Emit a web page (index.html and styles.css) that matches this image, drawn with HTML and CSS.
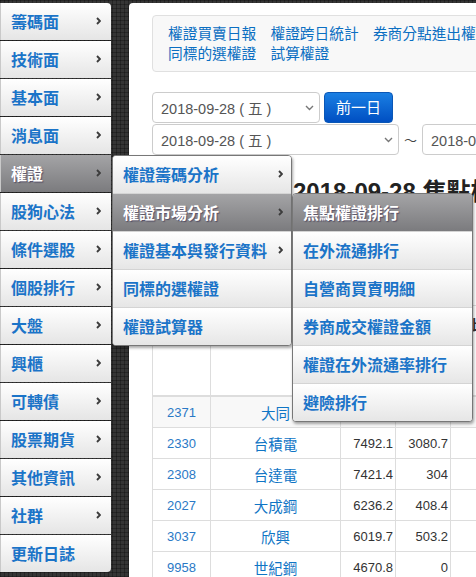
FILE: index.html
```html
<!DOCTYPE html>
<html lang="zh-Hant">
<head>
<meta charset="utf-8">
<title>焦點權證排行</title>
<link rel="stylesheet" href="styles.css">
</head>
<body>
<div class="page">
  <nav class="side">
    <ul class="menu">
      <li class="mi"><span class="lbl">籌碼面</span><svg class="chev" viewBox="0 0 5 8"><polyline points="1,1 4,4 1,7"/></svg></li>
      <li class="mi"><span class="lbl">技術面</span><svg class="chev" viewBox="0 0 5 8"><polyline points="1,1 4,4 1,7"/></svg></li>
      <li class="mi"><span class="lbl">基本面</span><svg class="chev" viewBox="0 0 5 8"><polyline points="1,1 4,4 1,7"/></svg></li>
      <li class="mi"><span class="lbl">消息面</span><svg class="chev" viewBox="0 0 5 8"><polyline points="1,1 4,4 1,7"/></svg></li>
      <li class="mi on"><span class="lbl">權證</span><svg class="chev" viewBox="0 0 5 8"><polyline points="1,1 4,4 1,7"/></svg>
        <ul class="sub sub1">
          <li class="si"><span class="lbl">權證籌碼分析</span><svg class="chev" viewBox="0 0 5 8"><polyline points="1,1 4,4 1,7"/></svg></li>
          <li class="si on"><span class="lbl">權證市場分析</span><svg class="chev" viewBox="0 0 5 8"><polyline points="1,1 4,4 1,7"/></svg>
            <ul class="sub sub2">
              <li class="si on"><span class="lbl">焦點權證排行</span></li>
              <li class="si"><span class="lbl">在外流通排行</span></li>
              <li class="si"><span class="lbl">自營商買賣明細</span></li>
              <li class="si"><span class="lbl">券商成交權證金額</span></li>
              <li class="si"><span class="lbl">權證在外流通率排行</span></li>
              <li class="si"><span class="lbl">避險排行</span></li>
            </ul>
          </li>
          <li class="si"><span class="lbl">權證基本與發行資料</span><svg class="chev" viewBox="0 0 5 8"><polyline points="1,1 4,4 1,7"/></svg></li>
          <li class="si"><span class="lbl">同標的選權證</span></li>
          <li class="si"><span class="lbl">權證試算器</span></li>
        </ul>
      </li>
      <li class="mi"><span class="lbl">股狗心法</span><svg class="chev" viewBox="0 0 5 8"><polyline points="1,1 4,4 1,7"/></svg></li>
      <li class="mi"><span class="lbl">條件選股</span><svg class="chev" viewBox="0 0 5 8"><polyline points="1,1 4,4 1,7"/></svg></li>
      <li class="mi"><span class="lbl">個股排行</span><svg class="chev" viewBox="0 0 5 8"><polyline points="1,1 4,4 1,7"/></svg></li>
      <li class="mi"><span class="lbl">大盤</span><svg class="chev" viewBox="0 0 5 8"><polyline points="1,1 4,4 1,7"/></svg></li>
      <li class="mi"><span class="lbl">興櫃</span><svg class="chev" viewBox="0 0 5 8"><polyline points="1,1 4,4 1,7"/></svg></li>
      <li class="mi"><span class="lbl">可轉債</span><svg class="chev" viewBox="0 0 5 8"><polyline points="1,1 4,4 1,7"/></svg></li>
      <li class="mi"><span class="lbl">股票期貨</span><svg class="chev" viewBox="0 0 5 8"><polyline points="1,1 4,4 1,7"/></svg></li>
      <li class="mi"><span class="lbl">其他資訊</span><svg class="chev" viewBox="0 0 5 8"><polyline points="1,1 4,4 1,7"/></svg></li>
      <li class="mi"><span class="lbl">社群</span><svg class="chev" viewBox="0 0 5 8"><polyline points="1,1 4,4 1,7"/></svg></li>
      <li class="mi last"><span class="lbl">更新日誌</span></li>
    </ul>
  </nav>

  <main class="panel">
    <div class="crumbs">
      <a href="#">權證買賣日報</a>
      <a href="#">權證跨日統計</a>
      <a href="#">券商分點進出權證</a>
      <a href="#">權證熱門排行</a>
      <a href="#">權證成交量統計</a>
      <a href="#">同標的選權證</a>
      <a href="#">試算權證</a>
    </div>

    <div class="dates">
      <div class="row">
        <div class="sel w1"><span>2018-09-28 ( 五 )</span><svg class="down" viewBox="0 0 9 6"><polyline points="1,1 4.5,4.5 8,1"/></svg></div>
        <button class="btn" type="button">前一日</button>
      </div>
      <div class="row">
        <div class="sel w2"><span>2018-09-28 ( 五 )</span><svg class="down" viewBox="0 0 9 6"><polyline points="1,1 4.5,4.5 8,1"/></svg></div>
        <span class="tilde">～</span>
        <div class="sel w2"><span>2018-09-28 ( 五 )</span><svg class="down" viewBox="0 0 9 6"><polyline points="1,1 4.5,4.5 8,1"/></svg></div>
      </div>
    </div>

    <h2 class="title">2018-09-28 焦點權證排行</h2>

    <table class="grid">
      <colgroup>
        <col class="c1"><col class="c2"><col class="c3"><col class="c4"><col class="c5">
      </colgroup>
      <thead>
        <tr>
          <th><div class="th">代號</div></th>
          <th><div class="th">名稱</div></th>
          <th><div class="th">成交金額</div></th>
          <th><div class="th">權證金額</div></th>
          <th><div class="th">比例</div></th>
        </tr>
      </thead>
      <tbody>
        <tr class="hl"><td class="code">2371</td><td class="name">大同</td><td class="num">7533.6</td><td class="num">1121.4</td><td></td></tr>
        <tr><td class="code">2330</td><td class="name">台積電</td><td class="num">7492.1</td><td class="num">3080.7</td><td></td></tr>
        <tr><td class="code">2308</td><td class="name">台達電</td><td class="num">7421.4</td><td class="num">304</td><td></td></tr>
        <tr><td class="code">2027</td><td class="name">大成鋼</td><td class="num">6236.2</td><td class="num">408.4</td><td></td></tr>
        <tr><td class="code">3037</td><td class="name">欣興</td><td class="num">6019.7</td><td class="num">503.2</td><td></td></tr>
        <tr><td class="code">9958</td><td class="name">世紀鋼</td><td class="num">4670.8</td><td class="num">0</td><td></td></tr>
      </tbody>
    </table>
  </main>
</div>
</body>
</html>
```

FILE: styles.css
```css
html, body {
  margin: 0;
  padding: 0;
  height: 100%;
  overflow: hidden;
}

body {
  background-color: #353535;
  background-image:
    linear-gradient(rgba(0, 0, 0, 0.28) 1px, transparent 1px),
    linear-gradient(90deg, rgba(0, 0, 0, 0.28) 1px, transparent 1px);
  background-size: 4px 4px;
  font-family: "Liberation Sans", "Noto Sans CJK TC", sans-serif;
}

.page {
  display: flex;
  align-items: flex-start;
  gap: 18px;
  padding-top: 3px;
}

/* ---------- sidebar ---------- */
.side {
  flex: none;
  width: 111px;
  position: relative;
  z-index: 5;
}

.menu {
  list-style: none;
  margin: 0;
  padding: 0;
}

.mi {
  position: relative;
  box-sizing: border-box;
  height: 37px;
  margin-bottom: 1px;
  padding: 0 10px 2px 10px;
  display: flex;
  align-items: center;
  justify-content: space-between;
  background: linear-gradient(#ffffff, #e5e5e5);
  border-left: 1px solid #c9c9c9;
}

.mi:first-child {
  border-top-right-radius: 4px;
}

.mi.last {
  border-bottom-right-radius: 4px;
}

.lbl {
  font-family: "Noto Sans CJK TC", sans-serif;
  font-weight: 700;
  font-size: 16px;
  line-height: 20px;
  color: #1b74c8;
  white-space: nowrap;
}

.on > .lbl {
  color: #ffffff;
  text-shadow: 1px 1px 1px rgba(40, 30, 70, 0.55);
}

.mi.on,
.si.on {
  background: linear-gradient(#a4a4a6, #7b7b7e);
}

.chev {
  width: 5px;
  height: 8px;
  flex: none;
}

.chev polyline {
  fill: none;
  stroke: #3c3c3c;
  stroke-width: 1.9;
}

/* ---------- flyout menus ---------- */
.sub {
  list-style: none;
  margin: 0;
  padding: 0;
  position: absolute;
  box-sizing: border-box;
  border: 1px solid #777777;
  border-radius: 4px;
  background: #ffffff;
  box-shadow: 1px 2px 3px rgba(0, 0, 0, 0.35);
}

.sub1 {
  left: 111px;
  top: 0;
  width: 180px;
}

.sub2 {
  left: calc(100% + 1px);
  top: -1px;
  width: 181px;
}

.si {
  position: relative;
  height: 35px;
  padding: 0 8px 2px 10px;
  display: flex;
  align-items: center;
  justify-content: space-between;
  background: linear-gradient(#ffffff, #e6e6e6);
  border-bottom: 1px solid #d4d4d4;
}

.si:first-child {
  border-radius: 3px 3px 0 0;
}

.si:last-child {
  border-bottom: 0;
  border-radius: 0 0 3px 3px;
}

/* ---------- main panel ---------- */
.panel {
  flex: none;
  width: 720px;
  min-height: 640px;
  box-sizing: border-box;
  padding: 12px 0 0 23px;
  background: #ffffff;
  border-top-left-radius: 4px;
}

.crumbs {
  width: 640px;
  box-sizing: border-box;
  display: flex;
  flex-wrap: wrap;
  column-gap: 14.3px;
  padding: 7px 15px 8px;
  background: #f8f8f8;
  border: 1px solid #e0e0e0;
  border-radius: 4px;
}

.crumbs a {
  font-family: "Noto Sans CJK TC", sans-serif;
  font-size: 14.7px;
  line-height: 20px;
  color: #0b6fc2;
  text-decoration: none;
  white-space: nowrap;
}

.dates {
  margin-top: 20px;
}

.row {
  display: flex;
  align-items: center;
}

.row + .row {
  margin-top: 1px;
}

.sel {
  box-sizing: border-box;
  height: 31px;
  padding: 0 5px 0 8px;
  display: flex;
  align-items: center;
  justify-content: space-between;
  background: #ffffff;
  border: 1px solid #cccccc;
  border-radius: 4px;
  font-size: 14.5px;
  color: #555555;
  white-space: nowrap;
}

.w1 { width: 168px; }
.w2 { width: 247px; }

.down {
  width: 9px;
  height: 6px;
  flex: none;
}

.down polyline {
  fill: none;
  stroke: #777777;
  stroke-width: 1.4;
}

.btn {
  margin-left: 4px;
  width: 69px;
  height: 31px;
  padding: 0 0 2px;
  border: 1px solid #0a57b6;
  border-radius: 4px;
  background: linear-gradient(#1a7fe3, #004fc2);
  color: #ffffff;
  font-family: "Noto Sans CJK TC", sans-serif;
  font-size: 15px;
}

.tilde {
  width: 23px;
  text-align: center;
  font-family: "Noto Sans CJK TC", sans-serif;
  font-size: 13px;
  color: #444444;
}

.title {
  margin: 21px 0 0;
  padding-left: 141px;
  font-family: "Liberation Sans", "Noto Sans CJK TC", sans-serif;
  font-weight: 700;
  font-size: 24px;
  line-height: 32px;
  color: #222222;
  white-space: nowrap;
}

/* ---------- table ---------- */
.grid {
  margin-top: 97px;
  table-layout: fixed;
  width: 369px;
  border-collapse: separate;
  border-spacing: 0;
  border-left: 1px solid #dddddd;
  border-top: 1px solid #dddddd;
}

.c1 { width: 58px; }
.c2 { width: 130px; }
.c3 { width: 55px; }
.c4 { width: 55px; }
.c5 { width: 70px; }

.grid th {
  height: 89px;
  padding: 0;
  vertical-align: top;
  border-right: 1px solid #dddddd;
  border-bottom: 2px solid #dddddd;
  font-family: "Noto Sans CJK TC", sans-serif;
  font-size: 14px;
  color: #333333;
}

.th {
  padding-top: 8px;
}

.grid td {
  height: 30px;
  padding: 0 2px;
  border-right: 1px solid #dddddd;
  border-bottom: 1px solid #dddddd;
  font-size: 13px;
  white-space: nowrap;
}

.grid tr.hl td {
  background: #f8f8f8;
}

.code {
  text-align: center;
  color: #2a79c6;
}

.name {
  text-align: center;
  font-family: "Noto Sans CJK TC", sans-serif;
  font-size: 14.5px !important;
  color: #0f75c5;
}

.num {
  text-align: right;
  color: #333333;
}
```
